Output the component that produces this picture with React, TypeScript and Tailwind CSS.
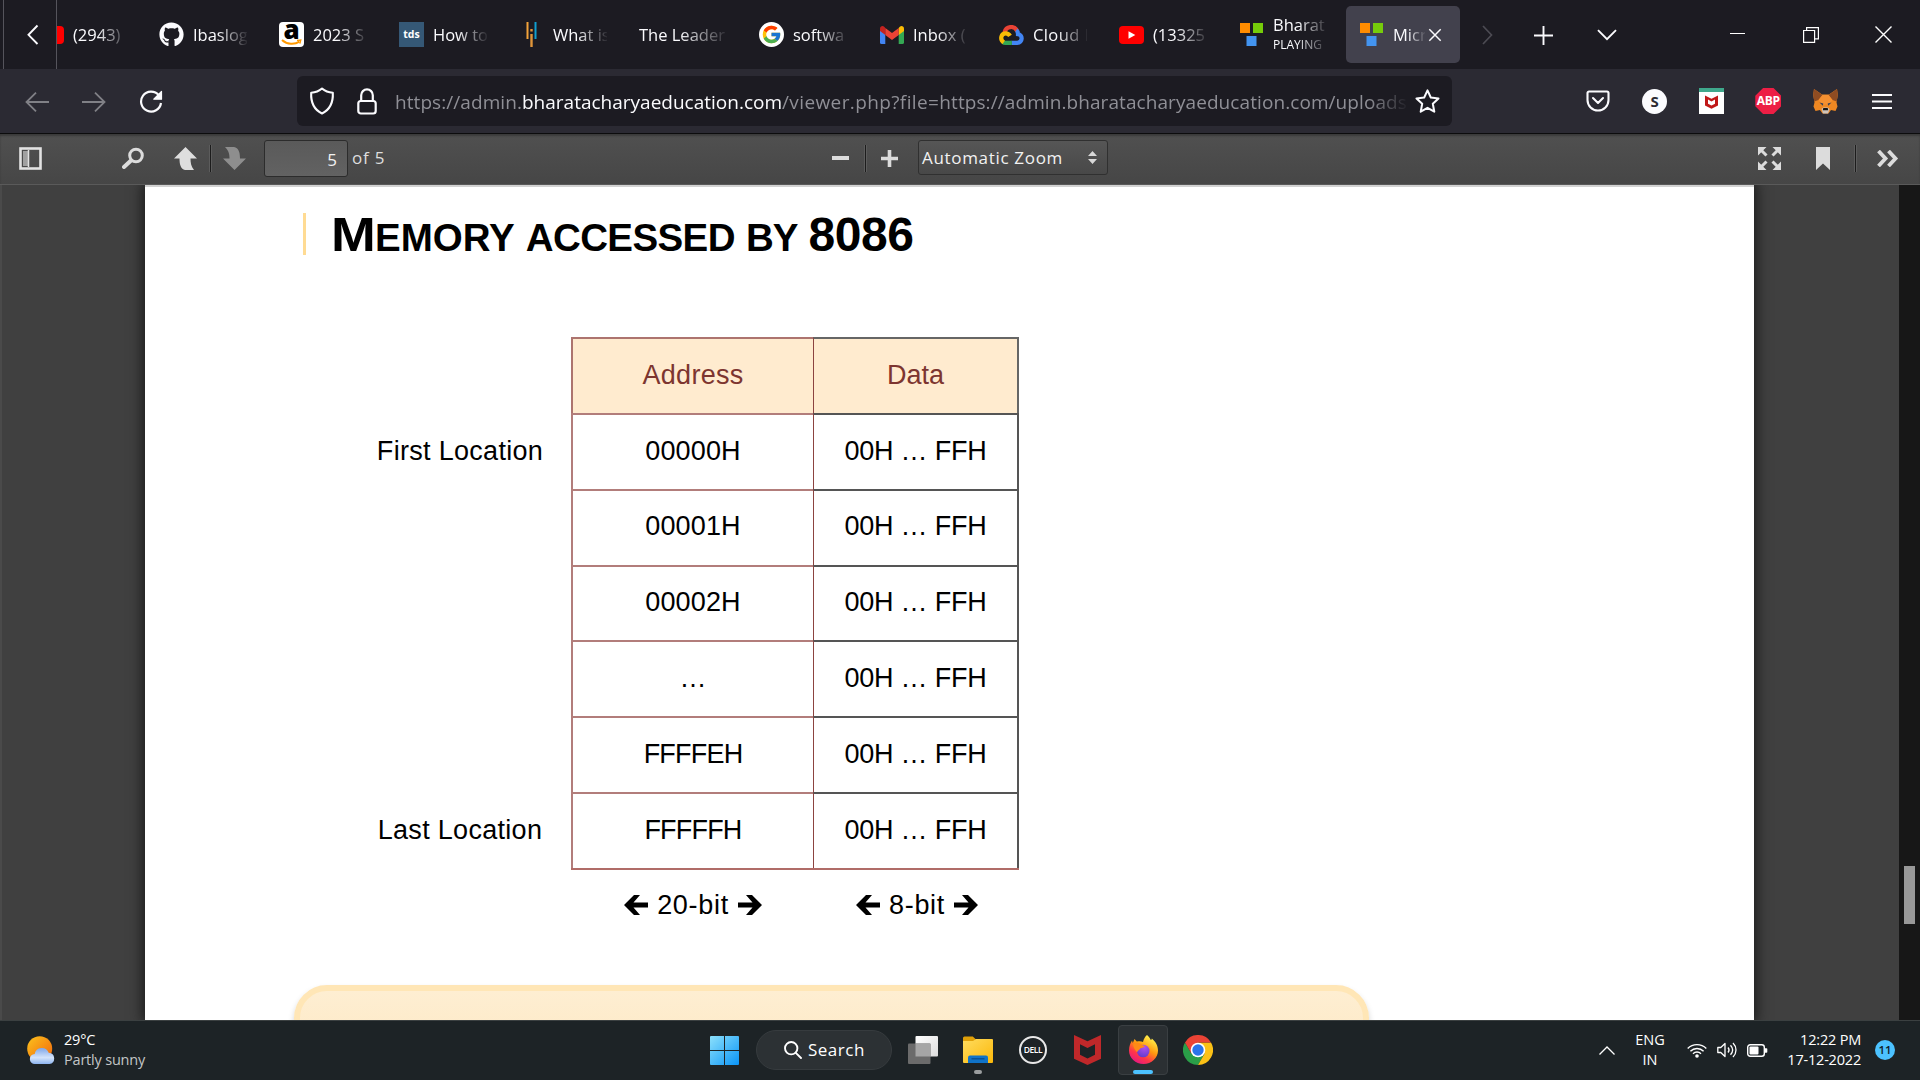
import React, { type ReactNode } from "react";
import { FaGithub } from "react-icons/fa";
import { FcGoogle } from "react-icons/fc";

/* ---------- favicons ---------- */

const YouTube = () => (
  <svg width="25" height="18" viewBox="0 0 25 18">
    <rect width="25" height="18" rx="4" fill="#ff0000" />
    <path d="M9.500 5.200v7.600l6.800-3.800z" fill="#fff" />
  </svg>
);

const Amazon = () => (
  <svg width="25" height="25" viewBox="0 0 25 25">
    <rect width="25" height="25" rx="4" fill="#fff" />
    <text x="12.500" y="16.500" textAnchor="middle" fontFamily="Open Sans, sans-serif" fontSize="26" fontWeight="800" fill="#000">a</text>
    <path d="M3 18c5.500 4.800 12.500 4.900 17.500 1.600" fill="none" stroke="#ff9900" strokeWidth="2" />
    <path d="M18 18.300l3.800-.300-.900 3.600" fill="none" stroke="#ff9900" strokeWidth="1.300" />
  </svg>
);

const Tds = () => (
  <div className="flex h-[25px] w-[25px] items-center justify-center bg-[#355876] font-['Open_Sans',sans-serif] text-[10.5px] font-bold text-white">
    tds
  </div>
);

const Bars = () => (
  <svg width="25" height="25" viewBox="0 0 25 25">
    <path d="M8.500 0v17" stroke="#f2a33a" strokeWidth="2" />
    <path d="M16.500 0v17" stroke="#0f9fd0" strokeWidth="2" />
    <path d="M12.500 7v2.500M12.500 12v13" stroke="#e0953a" strokeWidth="2.400" />
  </svg>
);

const Google = () => (
  <div className="flex h-[25px] w-[25px] items-center justify-center rounded-full bg-white">
    <FcGoogle size={21} />
  </div>
);

const Gmail = () => (
  <svg width="24" height="18" viewBox="0 0 24 18">
    <path d="M0 3.500h5.300V18H1.600A1.600 1.600 0 0 1 0 16.400z" fill="#4285f4" />
    <path d="M24 3.500h-5.300V18h3.700a1.600 1.600 0 0 0 1.600-1.600z" fill="#34a853" />
    <path d="M18.700 2v7L24 5V2.800c0-2.500-2.600-3.500-4.200-2z" fill="#fbbc04" />
    <path d="M5.300 9V2L12 7l6.700-5v7L12 14z" fill="#ea4335" />
    <path d="M0 2.800V5l5.300 4V2L4.200.800C2.600-.700 0 .300 0 2.800z" fill="#c5221f" />
  </svg>
);

const GoogleCloud = () => (
  <svg width="25" height="20" viewBox="0 0 25 20" fill="none" strokeWidth="4.200">
    <path d="M5.500 7.300C7 1 15.500 0 18.300 6.200" stroke="#ea4335" />
    <path d="M17.300 5.200c1.500 1 1.700 2.500 1.700 4 5 .5 5 8.600-.8 8.600H12.500" stroke="#4285f4" />
    <path d="M12.800 17.800H6.500c-1 0-2-.3-2.600-.9" stroke="#34a853" />
    <path d="M4.800 17.300C.500 14.500 2 8.300 6.800 8.300c2 0 3.300 1 4.200 2.600" stroke="#fbbc04" />
  </svg>
);

const Squares = () => (
  <svg width="23" height="23" viewBox="0 0 23 23">
    <rect width="10" height="10" fill="#ff8c00" />
    <rect x="13" width="10" height="10" fill="#76cc0a" />
    <rect x="6.500" y="13" width="10" height="10" fill="#4394f0" />
  </svg>
);

/* ---------- tab strip ---------- */

const fade = "[mask-image:linear-gradient(to_right,black_45%,transparent_104%)]";

const Tab = ({ icon, children, wide }: { icon?: ReactNode; children: ReactNode; wide?: boolean }) => (
  <div className="flex h-full w-[120px] shrink-0 items-center pl-4">
    {icon && <div className="mr-[9px] flex w-[25px] shrink-0 items-center justify-center">{icon}</div>}
    <div className={`${wide ? "w-[88px]" : "w-[54px]"} overflow-hidden pt-[2px] whitespace-nowrap ${fade}`}>{children}</div>
  </div>
);

const TabStrip = () => (
  <div className="flex h-[69px] bg-[#1c1b22] text-[16.5px] text-[#fbfbfe]">
    <div className="ml-[3px] flex w-[54px] items-center border-x border-[#55545c] pl-[22px]">
      <svg width="14" height="22" viewBox="0 0 14 22" fill="none" stroke="#fbfbfe" strokeWidth="1.900">
        <path d="M11.500 1.500L2.500 10.800l9 9.200" />
      </svg>
    </div>
    <div className="flex w-[1406px] overflow-hidden">
      <div className="-ml-[34px] flex">
        <Tab icon={<YouTube />}>(2943)</Tab>
        <Tab icon={<FaGithub size={25} />}>Ibaslog</Tab>
        <Tab icon={<Amazon />}>2023 S</Tab>
        <Tab icon={<Tds />}>How to</Tab>
        <Tab icon={<Bars />}>What is</Tab>
        <Tab wide>The Leader</Tab>
        <Tab icon={<Google />}>softwa</Tab>
        <Tab icon={<Gmail />}>Inbox (</Tab>
        <Tab icon={<GoogleCloud />}><span className="tracking-[0.4px]">Cloud I</span></Tab>
        <Tab icon={<YouTube />}>(13325</Tab>
        <Tab icon={<Squares />}>
          <div className="-mt-[2px] leading-[20px]">Bharat</div>
          <div className="text-[12px] leading-[19px]">PLAYING</div>
        </Tab>
        <div className="flex w-[120px] items-center pl-[3px]">
          <div className="flex h-[57px] w-[114px] items-center rounded-[5px] bg-[#42414d] pl-[14px]">
            <Squares />
            <div className={`ml-[10px] w-[32px] overflow-hidden pt-[2px] ${fade}`}>Micr</div>
            <svg className="ml-[3px]" width="14" height="14" viewBox="0 0 14 14" stroke="#fbfbfe" strokeWidth="1.500">
              <path d="M1.300 1.300l11.400 11.400M12.700 1.300L1.300 12.700" />
            </svg>
          </div>
        </div>
      </div>
    </div>
    <div className="flex flex-1 items-center">
      <svg className="ml-[18px]" width="12" height="20" viewBox="0 0 12 20" fill="none" stroke="#4c4b53" strokeWidth="1.700">
        <path d="M2 1l8.500 9L2 19" />
      </svg>
      <svg className="ml-[41px] mt-[1px]" width="19" height="19" viewBox="0 0 19 19" stroke="#fbfbfe" strokeWidth="1.900">
        <path d="M9.500 0v19M0 9.500h19" />
      </svg>
      <svg className="ml-[44px]" width="20" height="12" viewBox="0 0 20 12" fill="none" stroke="#fbfbfe" strokeWidth="1.900">
        <path d="M1 1.200l9 9 9-9" />
      </svg>
      <svg className="ml-[113px]" width="15" height="3" viewBox="0 0 15 3" fill="#fff">
        <rect width="15" height="1" />
      </svg>
      <svg className="ml-[58px]" width="16" height="16" viewBox="0 0 16 16" fill="none" stroke="#fff" strokeWidth="1.200">
        <path d="M.600 3.500h11v11.900H.600zM3.600 3.200V.600h11.800v11.300h-3.500" />
      </svg>
      <svg className="ml-[56px]" width="17" height="17" viewBox="0 0 17 17" stroke="#fff" strokeWidth="1.400">
        <path d="M.500.500l16 16M16.500.500l-16 16" />
      </svg>
    </div>
  </div>
);

/* ---------- navigation bar ---------- */

const NavCell = ({ children }: { children: ReactNode }) => (
  <div className="flex w-[56.800px] shrink-0 items-center justify-center">{children}</div>
);

const NavBar = () => (
  <div className="flex h-[65px] items-center border-b border-[#0c0c0d] bg-[#2b2a33]">
    <div className="flex w-[297px] shrink-0 items-center pt-[1px] pl-[9px]">
      <NavCell>
        <svg width="24" height="20" viewBox="0 0 24 20" fill="none" stroke="#808086" strokeWidth="1.800">
          <path d="M24 10H1.500M11 .700L1.500 10l9.500 9.300" />
        </svg>
      </NavCell>
      <NavCell>
        <svg width="24" height="20" viewBox="0 0 24 20" fill="none" stroke="#808086" strokeWidth="1.800">
          <path d="M0 10h22.500M13 .700l9.500 9.300-9.500 9.300" />
        </svg>
      </NavCell>
      <NavCell>
        <svg width="24" height="24" viewBox="0 0 24 24" fill="none" stroke="#fbfbfe" strokeWidth="2.200">
          <path d="M19.800 5.200A10 10 0 1 0 22 13" />
          <path d="M22.500 1.500v7.700h-7.700z" fill="#fbfbfe" strokeWidth="1.200" strokeLinejoin="round" />
        </svg>
      </NavCell>
    </div>
    <div className="flex h-[50px] w-[1155px] shrink-0 items-center rounded-[6px] bg-[#1c1b22] pl-[12px] text-[19px] text-[#8f8f96]">
      <svg width="26" height="28" viewBox="0 0 26 28" fill="none" stroke="#fbfbfe" strokeWidth="2.100" strokeLinejoin="round">
        <path d="M13 1.500c3 2.700 6.500 4 10.800 4.200C24.300 15 21 22.500 13 26.500 5 22.500 1.700 15 2.200 5.700 6.500 5.500 10 4.200 13 1.500z" />
      </svg>
      <svg className="ml-[22px]" width="20" height="27" viewBox="0 0 20 27" fill="none" stroke="#fbfbfe" strokeWidth="2.200">
        <path d="M4.200 13V7.200a5.800 5.800 0 0 1 11.600 0V13" />
        <rect x="1.300" y="13" width="17.400" height="12.500" rx="2.500" />
      </svg>
      <div className="ml-[18px] w-[1014px] overflow-hidden pt-[3px] whitespace-nowrap [mask-image:linear-gradient(to_right,black_96%,transparent)]">
        <span className="tracking-[0.07px]">https://admin.</span>
        <span className="text-[#fbfbfe]">bharatacharyaeducation.com</span>
        <span className="tracking-[0.390px]">/viewer.php?file=</span>
        <span className="tracking-[0.08px]">https://admin.bharatacharyaeducation.com/uploads</span>
      </div>
      <svg className="ml-[6px]" width="25" height="25" viewBox="0 0 25 25" fill="none" stroke="#fbfbfe" strokeWidth="2" strokeLinejoin="round">
        <path d="M12.500 1.300l3.300 7.200 7.700.900-5.700 5.400 1.500 7.900-6.800-3.900-6.800 3.900 1.500-7.900L1.500 9.400l7.700-.900z" />
      </svg>
    </div>
    <div className="flex items-center pl-[117.500px]">
      <NavCell>
        <svg width="24" height="22" viewBox="0 0 24 22" fill="none" stroke="#fbfbfe" strokeWidth="2.100" strokeLinecap="round" strokeLinejoin="round">
          <path d="M3 1.500h18a1.500 1.500 0 0 1 1.500 1.500v7a10.500 10.500 0 0 1-21 0V3A1.500 1.500 0 0 1 3 1.500zM7 8l5 5 5-5" />
        </svg>
      </NavCell>
      <NavCell>
        <div className="flex h-[25px] w-[25px] items-center justify-center rounded-full bg-[#fbfbfe] text-[15px] font-bold text-[#2b2a33]">S</div>
      </NavCell>
      <NavCell>
        <svg width="25" height="26" viewBox="0 0 25 26">
          <rect width="25" height="26" fill="#fff" />
          <rect width="25" height="4" fill="#3fa88c" />
          <path d="M6 7.500l6.500 3.300L19 7.500v10l-6.500 3.200L6 17.500z" fill="#c01818" />
          <path d="M9 11.500l3.500 2 3.500-2v4.300l-3.500 1.800L9 15.800z" fill="#fff" />
        </svg>
      </NavCell>
      <NavCell>
        <div className="flex h-[26px] w-[26px] items-center justify-center bg-[#ed1e45] text-[12px] font-bold tracking-[-0.3px] text-white [clip-path:polygon(30%_0,70%_0,100%_30%,100%_70%,70%_100%,30%_100%,0_70%,0_30%)]">
          ABP
        </div>
      </NavCell>
      <NavCell>
        <svg width="25" height="25" viewBox="0 0 25 25">
          <path d="M1 0l8 5.500h7L24 0l.800 6-1.300 7.500 1 4L22.500 22l-4.500-1-2.500 3.500h-6L7 21l-4.500 1L.500 17.500l1-4L.200 6z" fill="#ee8722" />
          <path d="M1 0l8.500 6-4 5-4.200 1.500L.200 6zM24 0l-8.500 6 4 5 4.200 1.500L24.800 6z" fill="#8f4c22" />
          <path d="M5.500 11l4-5h6l4 5-3.500 4.500h-7z" fill="#f59031" />
          <path d="M6.500 13.500l3.800 1-.500 2.200zM18.500 13.500l-3.800 1 .500 2.200z" fill="#33405a" />
          <path d="M8.500 20l2-1.500h4l2 1.500-1.500 4.500h-5z" fill="#cfc3ba" />
          <path d="M10.300 19h4.400l.500 2.300H9.800z" fill="#161616" />
        </svg>
      </NavCell>
      <NavCell>
        <svg width="20" height="15" viewBox="0 0 20 15" fill="#fbfbfe">
          <rect width="20" height="2" />
          <rect y="6.500" width="20" height="2" />
          <rect y="13" width="20" height="2" />
        </svg>
      </NavCell>
    </div>
  </div>
);

/* ---------- PDF viewer toolbar ---------- */

const Separator = ({ className }: { className: string }) => (
  <div className={`h-[27px] w-[3px] shrink-0 border-x border-[#5c5c5c] bg-[#1c1c1c] ${className}`} />
);

const PdfToolbar = () => (
  <div className="flex h-[51px] items-center border-b border-[#5a5a5a] bg-linear-to-b from-[#505050] to-[#464646] pb-[2px] text-[17px] text-[#dedede] shadow-[inset_0_2px_2px_#3a3a3a]">
    <svg className="ml-[19px] shrink-0" width="23" height="23" viewBox="0 0 23 23" fill="none">
      <rect x="1.500" y="1.500" width="20" height="20" stroke="#e2e2e2" strokeWidth="2.600" />
      <rect x="4" y="4" width="5" height="15" fill="#a0a0a0" />
      <path d="M9.500 3v17" stroke="#e2e2e2" strokeWidth="1.500" />
    </svg>
    <svg className="ml-[80px] shrink-0" width="23" height="22" viewBox="0 0 23 22" fill="none" stroke="#dcdcdc">
      <circle cx="14" cy="8.500" r="6.300" strokeWidth="3" />
      <path d="M9 13.500L2 20" strokeWidth="4" strokeLinecap="round" />
    </svg>
    <svg className="ml-[29px] shrink-0" width="23" height="23" viewBox="0 0 23 23" fill="#dedede">
      <path d="M11.500 0L23 11.500h-6.500c0 4 .5 8 3.500 11.500h-9C7 22 5.500 18 5.500 11.500H0z" />
    </svg>
    <Separator className="ml-[12px]" />
    <svg className="ml-[11px] shrink-0" width="23" height="23" viewBox="0 0 23 23" fill="#8e8e8e">
      <path d="M11.500 23L0 11.500h6.500C6.500 7.500 6 4 2 0h9c4.500 1 6 5 6 11.500h6z" />
    </svg>
    <div className="ml-[18px] flex h-[37px] w-[84px] shrink-0 items-center justify-end rounded-[3px] border border-[#2c2c2c] bg-linear-to-b from-[#5a5a5a] to-[#626262] pt-[3px] pr-[10px] text-[#f2f2f2]">5</div>
    <span className="ml-[4px] w-[36px] shrink-0 whitespace-nowrap tracking-[0.8px]">of 5</span>
    <div className="ml-[444px] h-[4px] w-[17px] shrink-0 bg-[#dcdcdc]" />
    <Separator className="ml-[15px]" />
    <svg className="ml-[14px] shrink-0" width="17" height="17" viewBox="0 0 17 17" stroke="#dcdcdc" strokeWidth="3.600">
      <path d="M8.500 0v17M0 8.500h17" />
    </svg>
    <div className="mb-[2px] ml-[20px] flex h-[35px] w-[190px] shrink-0 items-center justify-between rounded-[3px] border border-[#303030] bg-linear-to-b from-[#565656] to-[#484848] pr-[10px] pl-[3px] text-[#f2f2f2]">
      <span className="pt-[1px] tracking-[0.680px]">Automatic Zoom</span>
      <svg width="9" height="13" viewBox="0 0 9 13" fill="#d8d8d8">
        <path d="M4.500 0L9 5H0zM4.500 13L0 8h9z" />
      </svg>
    </div>
    <svg className="ml-auto shrink-0" width="23" height="23" viewBox="0 0 23 23" fill="#dcdcdc" stroke="#dcdcdc" strokeWidth="3">
      <path d="M3 3l5.500 5.500M20 3l-5.500 5.500M3 20l5.500-5.500M20 20l-5.500-5.500" />
      <path d="M0 0h8.500L0 8.500zM23 0h-8.500L23 8.500zM0 23h8.500L0 14.500zM23 23h-8.500L23 14.500z" stroke="none" />
    </svg>
    <svg className="ml-[35px] shrink-0" width="14" height="23" viewBox="0 0 14 23" fill="#dcdcdc">
      <path d="M0 0h14v23l-7-6.500L0 23z" />
    </svg>
    <Separator className="ml-[24px]" />
    <svg className="mr-[21px] ml-[20px] shrink-0" width="22" height="17" viewBox="0 0 22 17" fill="none" stroke="#dcdcdc" strokeWidth="3.800">
      <path d="M1.500 1l7 7.500-7 7.500M11.500 1l7 7.500-7 7.500" />
    </svg>
  </div>
);

/* ---------- document page ---------- */

const rows = [
  { label: "First Location", address: "00000H", ls: "tracking-[0.15px]" },
  { label: "", address: "00001H", ls: "tracking-[0.15px]" },
  { label: "", address: "00002H", ls: "tracking-[0.15px]" },
  { label: "", address: "…", ls: "tracking-[0px]" },
  { label: "", address: "FFFFEH", ls: "tracking-[-0.8px]" },
  { label: "Last Location", address: "FFFFFH", ls: "tracking-[-0.8px]" },
];

const grid = "grid grid-cols-[224px_242px_206px]";

const ArrowLeft = () => (
  <svg width="24" height="20" viewBox="0 0 24 20">
    <path d="M0 10L10 0h6L9.500 7.500H24v5H9.500L16 20h-6z" />
  </svg>
);
const ArrowRight = () => (
  <svg width="24" height="20" viewBox="0 0 24 20">
    <path d="M24 10L14 0H8l6.500 7.500H0v5h14.500L8 20h6z" />
  </svg>
);

const DocumentPage = () => (
  <div className="w-[1609px] shrink-0 overflow-hidden border-t-2 border-[#d2d2d2] bg-white font-['Liberation_Sans',Arial,sans-serif] text-[27px] text-black shadow-[0_0_12px_3px_#1c1c1c]">
    <div className="mt-[26px] ml-[158px] flex h-[42px] border-l-[3px] border-[#ffdb93]">
      <h1 className="ml-[25px] flex items-baseline leading-[43px] font-bold whitespace-nowrap">
        <span className="origin-left scale-x-[1.12] text-[48px]">M</span>
        <span className="ml-[4px] text-[38.5px]">EMORY</span>
        <span className="ml-[11px] text-[38.5px] tracking-[-0.6px]">ACCESSED</span>
        <span className="ml-[11px] text-[38.5px] tracking-[-1px]">BY</span>
        <span className="ml-[11px] text-[48px] tracking-[-0.4px]">8086</span>
      </h1>
    </div>
    <div className="mt-[82px] ml-[202px]">
      <div className={grid}>
        <div />
        <div className="flex h-[76px] items-center justify-center border-t-2 border-l-2 border-[#ad746f] bg-[#ffebcf] pb-px text-[#7d3530] tracking-[0.25px]">Address</div>
        <div className="flex h-[76px] items-center justify-center border-t-2 border-r-2 border-l border-[#666666] border-l-[#8c4340] bg-[#ffebcf] pb-px text-[#7d3530]">Data</div>
      </div>
      {rows.map((r, i) => (
        <div key={i} className={`${grid} h-[75.800px]`}>
          <div className="flex items-center justify-center pl-[2px] tracking-[0.300px]">{r.label}</div>
          <div className={`flex items-center justify-center border-t-2 border-l-2 border-[#b27d7b] pb-[2px] ${r.ls}`}>{r.address}</div>
          <div className="flex items-center justify-center border-t-2 border-r-2 border-l border-[#555555] border-l-[#8c4340] pb-[2px] tracking-[-0.2px]">00H … FFH</div>
        </div>
      ))}
      <div className={grid}>
        <div />
        <div className="flex h-[72px] items-center justify-center gap-[9px] border-t-2 border-[#b06c68] pt-px pl-[2px] tracking-[0.700px]"><ArrowLeft />20-bit<ArrowRight /></div>
        <div className="flex h-[72px] items-center justify-center gap-[9px] border-t-2 border-[#b06c68] pt-px pl-[2px] tracking-[0.700px]"><ArrowLeft />8-bit<ArrowRight /></div>
      </div>
    </div>
    <div className="mt-[45px] ml-[149px] h-[120px] w-[1075px] rounded-[33px] border-[6px] border-[#ffe6b6] bg-linear-to-b from-[#feeed2] to-[#fce5bb] shadow-[0_4px_6px_#0000002e]" />
  </div>
);

/* ---------- taskbar ---------- */

const Taskbar = () => (
  <div className="flex h-[60px] items-center border-t border-[#3b4041] bg-[#1d2326] pb-px text-[14.5px] text-white">
    <svg className="ml-[27px] shrink-0" width="28" height="28" viewBox="0 0 28 28">
      <defs>
        <linearGradient id="sun" x1="0" y1="0" x2="1" y2="1"><stop offset="0" stopColor="#fcc31c" /><stop offset="1" stopColor="#f0640c" /></linearGradient>
        <linearGradient id="cloud" x1="0" y1="0" x2="0" y2="1"><stop offset="0" stopColor="#7ea6e8" /><stop offset=".6" stopColor="#d4e4fb" /><stop offset="1" stopColor="#8db4f0" /></linearGradient>
      </defs>
      <circle cx="12.700" cy="12.700" r="12.500" fill="url(#sun)" />
      <path d="M8 28a5 5 0 0 1-.300-10 7.300 7.300 0 0 1 14-1.300A5.700 5.700 0 0 1 22.500 28z" fill="url(#cloud)" />
    </svg>
    <div className="mb-px ml-[9px] w-[120px] shrink-0 leading-[20px] tracking-[-0.2px]">
      <div>29°C</div>
      <div className="text-[#c3c6c7]">Partly sunny</div>
    </div>

    <svg className="ml-[526px] shrink-0" width="29" height="29" viewBox="0 0 29 29">
      <defs>
        <linearGradient id="win" x1="0" y1="0" x2="1" y2="1"><stop offset="0" stopColor="#8ce0fb" /><stop offset="1" stopColor="#0a94f7" /></linearGradient>
      </defs>
      <path d="M1 0h13v14H0V1a1 1 0 0 1 1-1zM15 0h13a1 1 0 0 1 1 1v13H15zM0 15h14v14H1a1 1 0 0 1-1-1zM15 15h14v13a1 1 0 0 1-1 1H15z" fill="url(#win)" />
    </svg>
    <div className="ml-[17px] flex h-[40px] w-[136px] shrink-0 items-center rounded-full border border-[#363b3e] bg-[#2c3134] pl-[27px] text-[17px]">
      <svg width="18" height="18" viewBox="0 0 18 18" fill="none" stroke="#fff" strokeWidth="1.900" strokeLinecap="round">
        <circle cx="7.200" cy="7.200" r="6.200" />
        <path d="M11.800 11.800l5.200 5.200" />
      </svg>
      <span className="ml-[6px] tracking-[0.5px]">Search</span>
    </div>
    <svg className="ml-[16px] shrink-0" width="30" height="28" viewBox="0 0 30 28">
      <defs>
        <linearGradient id="pane" x1="0" y1="0" x2="1" y2="1"><stop offset="0" stopColor="#ffffff" /><stop offset="1" stopColor="#dcdcdc" /></linearGradient>
      </defs>
      <rect x="7.500" width="22.500" height="20.500" rx="1" fill="url(#pane)" />
      <rect y="7.500" width="22.500" height="20.500" rx="1" fill="#6b6b6b" />
      <rect x="7.500" y="7.500" width="15" height="13" fill="#a6a6a6" />
    </svg>
    <div className="mt-[10px] ml-[25px] flex shrink-0 flex-col items-center gap-[7px]">
      <svg width="30" height="27" viewBox="0 0 30 27">
        <defs>
          <linearGradient id="folder" x1="0" y1="0" x2="1" y2="1"><stop offset="0" stopColor="#ffdc5e" /><stop offset="1" stopColor="#fbb80a" /></linearGradient>
        </defs>
        <path d="M0 6V2A1.500 1.500 0 0 1 1.500.500h8.300L13 3.500V6z" fill="#e0a008" />
        <path d="M0 5h10l3-2h16a1 1 0 0 1 1 1v22a1 1 0 0 1-1 1H1a1 1 0 0 1-1-1z" fill="url(#folder)" />
        <path d="M5 27v-5.500a2 2 0 0 1 2-2h16a2 2 0 0 1 2 2V27z" fill="#1073c8" />
        <path d="M8.500 22.800h13" stroke="#07498a" strokeWidth="1.200" />
      </svg>
      <div className="h-[4px] w-[8px] rounded-full bg-[#9a9d9f]" />
    </div>
    <div className="ml-[26px] flex h-[28px] w-[28px] shrink-0 items-center justify-center rounded-full border-2 border-[#e8e8e8] text-[8.5px] font-semibold tracking-[-0.4px]">
      DELL
    </div>
    <svg className="ml-[27px] shrink-0" width="27" height="30" viewBox="0 0 27 30">
      <path d="M0 0l13.500 6.300L27 0v23.700L13.500 30 0 23.700zM6 9.200v10.500l7.500 3.800 7.500-3.800V9.200l-7.500 3.800z" fill="#c0282a" fillRule="evenodd" />
    </svg>
    <div className="ml-[17px] flex h-[50px] w-[50px] shrink-0 flex-col items-center justify-between rounded-[4px] border border-[#3a3f42] bg-[#2b3033] pt-[9px]">
      <svg width="29" height="29" viewBox="0 0 29 29">
        <defs>
          <linearGradient id="fox" x1=".8" y1=".1" x2=".25" y2="1"><stop offset="0" stopColor="#fff04a" /><stop offset=".4" stopColor="#ff980e" /><stop offset=".7" stopColor="#ff3647" /><stop offset="1" stopColor="#e31587" /></linearGradient>
          <radialGradient id="globe" cx=".6" cy=".2" r=".9"><stop offset="0" stopColor="#b050f0" /><stop offset="1" stopColor="#5a3ac8" /></radialGradient>
        </defs>
        <path d="M18 0c2 1.500 3 3.200 3.800 5 .8-.3 1-.8 1-1.500C26.500 6.500 29 10.500 29 15.500 29 23 22.500 29 14.500 29S0 23 0 15.500C0 11 1.500 8 3 5.500l.800 2.500L5.500 4l2.300 2.500c3-.5 4.500-.3 6.200.5C14.800 4 16 1.500 18 0z" fill="url(#fox)" />
        <circle cx="14.200" cy="16" r="6.300" fill="url(#globe)" />
        <path d="M4 9.500c3-2.500 7-2.300 9.500.8l2.500.7c-1 1.500-3 1.800-4.500 2.200-.8 1.500-2.500 2-3.500 4-2-2-3.500-4.500-4-7.700z" fill="#ff8a16" />
      </svg>
      <div className="h-[4px] w-[20px] rounded-full bg-[#4cc2ff]" />
    </div>
    <svg className="ml-[15px] shrink-0" width="30" height="30" viewBox="0 0 30 30">
      <path d="M2 7.500A15 15 0 0 0 15 30l6.500-11.250L15 15 8.500 18.750z" fill="#2a9e48" />
      <path d="M28 7.500A15 15 0 0 1 15 30l6.500-11.250L15 7.500z" fill="#fbc116" />
      <path d="M2 7.500A15 15 0 0 1 28 7.500H15l-6.500 11.250z" fill="#ea4335" />
      <circle cx="15" cy="15" r="7.300" fill="#fff" />
      <circle cx="15" cy="15" r="5.700" fill="#2a74ea" />
    </svg>

    <svg className="ml-auto shrink-0" width="16" height="9" viewBox="0 0 16 9" fill="none" stroke="#fff" strokeWidth="1.300">
      <path d="M.500 8.500L8 1l7.500 7.500" />
    </svg>
    <div className="ml-[18px] w-[34px] shrink-0 text-center leading-[20px]">ENG<br />IN</div>
    <svg className="ml-[20px] shrink-0" width="20" height="15" viewBox="0 0 20 15" fill="none" stroke="#fff" strokeWidth="1.400">
      <path d="M.700 5.500a13 13 0 0 1 18.600 0M3.400 8.200a9.300 9.300 0 0 1 13.200 0M6 10.700a5.700 5.700 0 0 1 8 0" />
      <circle cx="10" cy="13" r="1.800" fill="#fff" stroke="none" />
    </svg>
    <svg className="ml-[10px] shrink-0" width="21" height="16" viewBox="0 0 21 16" fill="none" stroke="#fff" strokeWidth="1.300" strokeLinejoin="round">
      <path d="M.800 5.500v5h3l4.200 4V1.500l-4.200 4zM11 5.500c1.300 1.500 1.300 3.500 0 5M13.500 3.200c2.700 3 2.700 6.600 0 9.600M16 1c4 4 4 10 0 14" />
    </svg>
    <svg className="ml-[9px] shrink-0" width="21" height="13" viewBox="0 0 21 13" fill="none">
      <rect x=".700" y=".700" width="16.600" height="11.600" rx="2.500" stroke="#fff" strokeWidth="1.400" />
      <rect x="2.500" y="2.500" width="9" height="8" rx="1" fill="#fff" />
      <path d="M18 4.300h1.500a.8.800 0 0 1 .8.800v2.800a.8.800 0 0 1-.8.800H18z" fill="#fff" />
    </svg>
    <div className="mb-px ml-[13px] w-[80px] shrink-0 text-right leading-[20px] tracking-[-0.2px] whitespace-nowrap">12:22 PM<br />17-12-2022</div>
    <div className="mr-[25px] ml-[14px] flex h-[20px] w-[20px] shrink-0 items-center justify-center rounded-full bg-[#4cc2ff] text-[11.5px] font-semibold text-[#10202a]">11</div>
  </div>
);

export default function App() {
  return (
    <div className="flex h-[1080px] w-[1920px] flex-col overflow-hidden bg-[#404040] font-['Open_Sans','Noto_Sans',sans-serif]">
      <TabStrip />
      <NavBar />
      <PdfToolbar />
      <div className="flex min-h-0 flex-1 overflow-hidden">
        <div className="flex flex-1 overflow-hidden border-l-2 border-[#4a4a4a] bg-[#404040] pl-[143px]">
          <DocumentPage />
        </div>
        <div className="w-[21px] shrink-0 bg-[#171717] pt-[681px] pl-[5px]">
          <div className="h-[58px] w-[11px] bg-[#989898]" />
        </div>
      </div>
      <Taskbar />
    </div>
  );
}
